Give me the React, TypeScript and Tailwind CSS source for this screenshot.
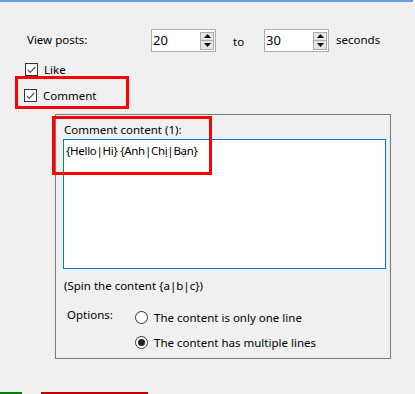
import { ReactNode } from 'react';

const font = { fontFamily: '"Segoe UI", "Noto Sans", "Open Sans", sans-serif' };

function SpinBox({ value }: { value: string }) {
    return (
        <div className="flex h-[23px] w-[65px] items-center justify-between border border-[#adadad] bg-white pl-[1px] pr-[1px]">
            <span className="text-[13px] leading-none text-black">{value}</span>
            <div className="flex h-[18px] w-[14px] flex-col">
                <div className="flex flex-1 items-center justify-center border border-[#adadad] bg-[#e5e5e5]">
                    <svg width="7" height="4" viewBox="0 0 7 4">
                        <path d="M3.5 0 L7 4 L0 4 Z" fill="#000" />
                    </svg>
                </div>
                <div className="-mt-[1px] flex flex-1 items-center justify-center border border-[#adadad] bg-[#e5e5e5]">
                    <svg width="7" height="4" viewBox="0 0 7 4">
                        <path d="M0 0 L7 0 L3.5 4 Z" fill="#000" />
                    </svg>
                </div>
            </div>
        </div>
    );
}

function CheckBox({ label }: { label: string }) {
    return (
        <div className="flex items-center gap-[6px]">
            <div className="flex h-[13px] w-[13px] items-center justify-center border border-[#333] bg-white">
                <svg width="9" height="8" viewBox="0 0 9 8">
                    <path d="M0.8 4 L3.3 6.5 L8.2 1" fill="none" stroke="#555" strokeWidth="1.2" />
                </svg>
            </div>
            <span className="text-[11.5px] leading-none text-black">{label}</span>
        </div>
    );
}

function Radio({ checked, children }: { checked?: boolean; children: ReactNode }) {
    return (
        <div className="flex items-center gap-[6px]">
            <div className="flex h-[13px] w-[13px] items-center justify-center rounded-full border border-[#333] bg-white">
                {checked && <div className="h-[7px] w-[7px] rounded-full bg-[#222]" />}
            </div>
            <span className="text-[11.5px] leading-none text-black">{children}</span>
        </div>
    );
}

export default function App() {
    return (
        <div className="relative flex h-[394px] w-[415px] flex-col overflow-hidden bg-[#f0f0f0]" style={font}>
            <div className="h-[2px] w-[413px] bg-[#6b9be0]" />

            {/* View posts row */}
            <div className="mt-[27px] flex items-center pl-[27px]">
                <span className="w-[124px] pb-[1px] text-[11.5px] text-black">View posts:</span>
                <SpinBox value="20" />
                <span className="w-[48px] pl-[17px] pt-[2px] text-[11.5px] text-black">to</span>
                <SpinBox value="30" />
                <span className="ml-[7px] pb-[1px] text-[11.5px] text-black">seconds</span>
            </div>

            <div className="mt-[11px] flex flex-col gap-[13px] pl-[25px]">
                <CheckBox label="Like" />
                <div className="-ml-[1px]">
                    <CheckBox label="Comment" />
                </div>
            </div>

            {/* Comment group */}
            <div className="ml-[55px] mt-[12px] flex h-[245px] w-[336px] flex-col border border-[#7a7a7a] pl-[7px] pr-[4px]">
                <span className="mt-[7px] pl-[1px] text-[11.5px] leading-[16px] text-black">Comment content (1):</span>
                <div className="mt-[1px] h-[130px] w-[323px] border border-[#0078d7] bg-white px-[2px] pt-[3px] text-[11.5px] leading-[16px] tracking-[-0.3px] text-black">
                    {'{Hello|Hi} {Anh|Chị|Bạn}'}
                </div>
                <span className="mt-[9px] pl-[1px] text-[11.5px] leading-[16px] text-black">(Spin the content {'{a|b|c}'})</span>
                <div className="mt-[13px] flex">
                    <span className="w-[72px] pl-[4px] text-[11.5px] leading-[16px] text-black">Options:</span>
                    <div className="mt-[4px] flex flex-col gap-[12px]">
                        <Radio>The content is only one line</Radio>
                        <Radio checked>The content has multiple lines</Radio>
                    </div>
                </div>
            </div>

            <div className="mt-auto flex h-[2px] gap-[19px]">
                <div className="w-[22px] bg-[#008000]" />
                <div className="w-[107px] bg-[#c00000]" />
            </div>

            {/* annotation boxes */}
            <div className="absolute left-[15px] top-[76px] h-[33px] w-[114px] border-[3px] border-[#ff0000]" />
            <div className="absolute left-[52px] top-[116px] h-[59px] w-[160px] border-[3px] border-[#ff0000]" />
        </div>
    );
}
